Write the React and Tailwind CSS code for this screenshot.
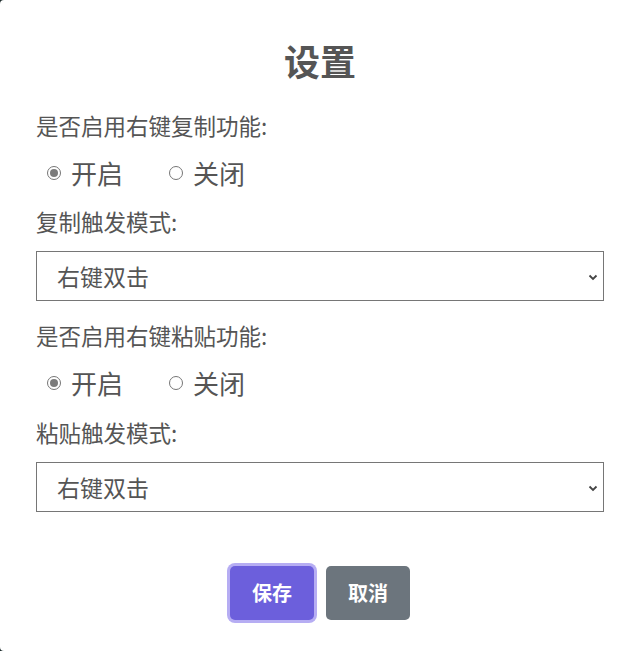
import React, { useState } from 'react';

const font = { fontFamily: '"Noto Sans CJK SC", "Noto Sans", sans-serif' };

const Radio = ({ checked, label, onClick, className = '' }) => (
  <label onClick={onClick} className={`flex items-center cursor-pointer ${className}`}>
    <span className="w-[14px] h-[14px] rounded-full border border-[#767676] bg-white flex items-center justify-center">
      {checked && <span className="w-[8px] h-[8px] rounded-full bg-[#7b7b7b]" />}
    </span>
    <span className="ml-[10px] text-[26px] leading-[30px] text-[#555]">{label}</span>
  </label>
);

const Select = ({ value, setValue }) => (
  <div className="relative h-[50px] border border-[#767676] bg-white">
    <select
      value={value}
      onChange={e => setValue(e.target.value)}
      className="appearance-none w-full h-full pl-[20px] pr-[40px] text-[23px] text-[#555] bg-transparent outline-none"
      style={font}
    >
      <option>右键双击</option>
      <option>右键单击</option>
    </select>
    <svg className="absolute right-[4px] top-[19px] pointer-events-none" width="12" height="12" viewBox="0 0 12 12">
      <path d="M2.5 4.5 L6 8 L9.5 4.5" fill="none" stroke="#444" strokeWidth="1.8" />
    </svg>
  </div>
);

const App = () => {
  const [copyOn, setCopyOn] = useState(true);
  const [pasteOn, setPasteOn] = useState(true);
  const [copyMode, setCopyMode] = useState('右键双击');
  const [pasteMode, setPasteMode] = useState('右键双击');

  return (
    <div className="w-[635px] h-[651px] bg-[#1d2b2b]" style={font}>
      <div className="w-full h-full bg-white rounded-l-[4px] pl-[36px] pr-[31px] pt-[36px] flex flex-col">
        <h1 className="h-[48px] leading-[48px] text-center text-[36px] font-bold text-[#555]">设置</h1>

        <div className="mt-[26px] h-[30px] leading-[30px] text-[22.5px] text-[#555]">是否启用右键复制功能:</div>
        <div className="mt-[18px] h-[30px] flex items-center pl-[11px]">
          <Radio checked={copyOn} label="开启" onClick={() => setCopyOn(true)} />
          <Radio checked={!copyOn} label="关闭" onClick={() => setCopyOn(false)} className="ml-[46px]" />
        </div>

        <div className="mt-[18px] h-[30px] leading-[30px] text-[22.5px] text-[#555]">复制触发模式:</div>
        <div className="mt-[15px]">
          <Select value={copyMode} setValue={setCopyMode} />
        </div>

        <div className="mt-[19px] h-[30px] leading-[30px] text-[22.5px] text-[#555]">是否启用右键粘贴功能:</div>
        <div className="mt-[18px] h-[30px] flex items-center pl-[11px]">
          <Radio checked={pasteOn} label="开启" onClick={() => setPasteOn(true)} />
          <Radio checked={!pasteOn} label="关闭" onClick={() => setPasteOn(false)} className="ml-[46px]" />
        </div>

        <div className="mt-[19px] h-[30px] leading-[30px] text-[22.5px] text-[#555]">粘贴触发模式:</div>
        <div className="mt-[15px]">
          <Select value={pasteMode} setValue={setPasteMode} />
        </div>

        <div className="mt-[54px] flex justify-center gap-[12px]">
          <button className="w-[84px] h-[54px] rounded-[5px] bg-[#6c5fdc] text-white text-[20px] font-bold ring-[3px] ring-[#b6adf3]">
            保存
          </button>
          <button className="w-[84px] h-[54px] rounded-[5px] bg-[#6c757d] text-white text-[20px] font-bold">
            取消
          </button>
        </div>
      </div>
    </div>
  );
};

export default App;
